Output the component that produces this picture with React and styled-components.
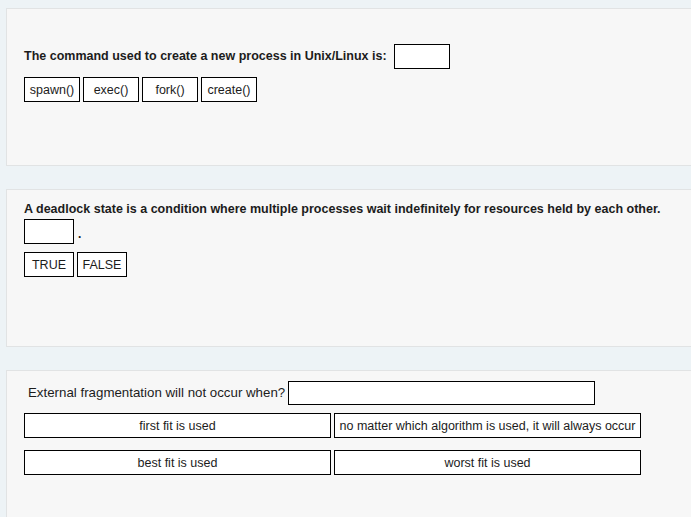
import React from 'react';
import styled, {createGlobalStyle} from 'styled-components';

const GlobalStyle = createGlobalStyle`
  html, body {
    margin: 0;
    padding: 0;
    background: #edf3f6;
    overflow: hidden;
  }
  body {
    font-family: "Liberation Sans", Arial, sans-serif;
    color: #1c1c1c;
  }
`;

const questions = [
  {
    id: 1,
    text: 'The command used to create a new process in Unix/Linux is:',
    layout: 'inline',
    options: ['spawn()', 'exec()', 'fork()', 'create()'],
    optWidth: 56,
    blankWidth: 56,
    pad: 35,
  },
  {
    id: 2,
    text: 'A deadlock state is a condition where multiple processes wait indefinitely for resources held by each other.',
    layout: 'block',
    options: ['TRUE', 'FALSE'],
    optWidth: 50,
    blankWidth: 50,
    pad: 12,
  },
  {
    id: 3,
    text: 'External fragmentation will not occur when?',
    layout: 'grid',
    options: [
      'first fit is used',
      'no matter which algorithm is used, it will always occur',
      'best fit is used',
      'worst fit is used',
    ],
    optWidth: 307,
    blankWidth: 307,
    pad: 10,
  },
];

function App() {
  return (
    <>
      <GlobalStyle />
      <Page>
        {questions.map((q) => (
          <Card key={q.id} $pad={q.pad}>
            {q.layout === 'inline' && (
              <QuestionRow $gap={7}>
                <Prompt>{q.text}</Prompt>
                <Blank $w={q.blankWidth} $h={25} />
              </QuestionRow>
            )}
            {q.layout === 'block' && (
              <>
                <Prompt>{q.text}</Prompt>
                <BlankRow>
                  <Blank $w={q.blankWidth} $h={25} />
                  <Dot>.</Dot>
                </BlankRow>
              </>
            )}
            {q.layout === 'grid' && (
              <QuestionRow $gap={3}>
                <PlainPrompt>{q.text}</PlainPrompt>
                <Blank $w={q.blankWidth} $h={24} />
              </QuestionRow>
            )}
            {q.layout === 'grid' ? (
              <OptionGrid>
                {q.options.map((o) => (
                  <Option key={o} $w={q.optWidth} $h={25}>{o}</Option>
                ))}
              </OptionGrid>
            ) : (
              <OptionRow>
                {q.options.map((o) => (
                  <Option key={o} $w={q.optWidth} $h={25}>{o}</Option>
                ))}
              </OptionRow>
            )}
          </Card>
        ))}
      </Page>
    </>
  );
}

const Page = styled.div`
  display: flex;
  flex-direction: column;
  gap: 23px;
  padding: 8px 0 0 6px;
`;

const Card = styled.section`
  box-sizing: border-box;
  height: 158px;
  background: #f7f7f7;
  border: 1px solid #e1e3e4;
  border-right: none;
  padding: ${(p) => p.$pad}px 0 0 17px;
`;

const QuestionRow = styled.div`
  display: flex;
  align-items: center;
  gap: ${(p) => p.$gap}px;
`;

const Prompt = styled.div`
  font-size: 12.5px;
  font-weight: bold;
  line-height: 15px;
`;

const PlainPrompt = styled.div`
  font-size: 13.3px;
  line-height: 16px;
  padding-left: 4px;
`;

const BlankRow = styled.div`
  display: flex;
  align-items: center;
  margin-top: 2px;
`;

const Dot = styled.span`
  font-size: 12px;
  font-weight: bold;
  margin: 5px 0 0 4px;
`;

const Blank = styled.div`
  box-sizing: border-box;
  width: ${(p) => p.$w}px;
  height: ${(p) => p.$h}px;
  background: #fff;
  border: 1px solid #000;
`;

const OptionRow = styled.div`
  display: flex;
  gap: 3px;
  margin-top: 8px;
`;

const OptionGrid = styled.div`
  display: grid;
  grid-template-columns: repeat(2, max-content);
  column-gap: 3px;
  row-gap: 12px;
  margin-top: 8px;
`;

const Option = styled.div`
  box-sizing: border-box;
  width: ${(p) => p.$w}px;
  height: ${(p) => p.$h}px;
  display: flex;
  align-items: center;
  justify-content: center;
  background: #fff;
  border: 1px solid #000;
  font-size: 12.5px;
  white-space: nowrap;
  overflow: hidden;
`;

export default App;
